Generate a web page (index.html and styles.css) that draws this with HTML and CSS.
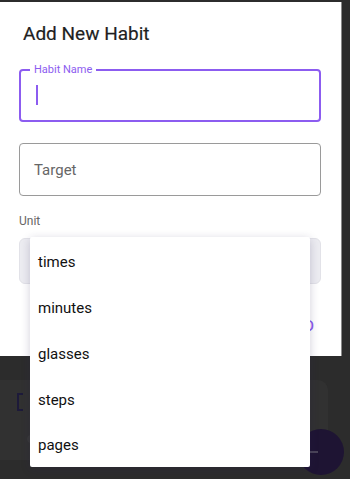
FILE: index.html
```html
<!DOCTYPE html>
<html>
<head>
<meta charset="utf-8">
<link rel="stylesheet" href="styles.css">
</head>
<body>
<div class="screen">
  <div class="bg-card">
    <span class="bg-box"></span>
    <span class="bg-bar"></span>
  </div>
  <div class="fab"><span class="fab-plus"></span></div>

  <div class="dialog">
    <h2 class="title">Add New Habit</h2>
    <div class="field field-focused">
      <span class="field-label">Habit Name</span>
      <span class="cursor"></span>
    </div>
    <div class="field">
      <span class="placeholder">Target</span>
    </div>
    <div class="unit-label">Unit</div>
    <div class="select"></div>
    <div class="actions"><span class="action-btn">ADD</span></div>
  </div>

  <ul class="menu">
    <li class="menu-item">times</li>
    <li class="menu-item">minutes</li>
    <li class="menu-item">glasses</li>
    <li class="menu-item">steps</li>
    <li class="menu-item">pages</li>
  </ul>
</div>
</body>
</html>
```
FILE: styles.css
```css
* { box-sizing: border-box; }
html, body {
  margin: 0;
  padding: 0;
  width: 350px;
  height: 479px;
  overflow: hidden;
  background: #2c2c2c;
  font-family: Roboto, "Noto Sans", sans-serif;
}
.screen {
  position: relative;
  width: 350px;
  height: 479px;
  padding: 380px 12px 0 0;
}
.bg-card {
  height: 80px;
  width: 338px;
  margin-left: -10px;
  background: #313131;
  border-radius: 10px;
  padding: 13px 0 0 37px;
  display: flex;
  flex-direction: column;
  gap: 24px;
}
.bg-box {
  display: block;
  width: 6px;
  height: 18px;
  border: 2px solid #1d1a3a;
  border-right: none;
  margin-left: -10px;
}
.bg-bar {
  display: block;
  width: 60px;
  height: 8px;
  border-radius: 4px;
  background: #383838;
}
.fab {
  position: absolute;
  left: 298px;
  top: 429px;
  width: 46px;
  height: 46px;
  border-radius: 50%;
  background: #1e1433;
  display: flex;
  align-items: center;
  justify-content: center;
}
.fab-plus {
  width: 8px;
  height: 2px;
  background: #4a4458;
  margin-left: -14px;
}
.dialog {
  position: absolute;
  left: 0;
  top: 2px;
  width: 342px;
  height: 354px;
  background: #ffffff;
  border-right: 1px solid #8a8a8a;
  padding: 20px 20px 0 19px;
  display: flex;
  flex-direction: column;
}
.title {
  margin: 0 0 0 4px;
  font-size: 19px;
  font-weight: 400;
  color: #1f1f1f;
  line-height: 24px;
  -webkit-text-stroke: 0.2px #1f1f1f;
}
.field {
  position: relative;
  margin-top: 23px;
  height: 53px;
  width: 302px;
  border: 1px solid #9a9a9a;
  border-radius: 4px;
  display: flex;
  align-items: center;
  padding-left: 14px;
}
.field-focused {
  border: 2px solid #8c5cf0;
  margin-top: 23px;
}
.field + .field { margin-top: 21px; }
.field-label {
  position: absolute;
  left: 9px;
  top: -8px;
  background: #fff;
  padding: 0 4px;
  font-size: 11px;
  line-height: 13px;
  color: #8c5cf0;
}
.cursor {
  display: block;
  width: 2px;
  height: 20px;
  background: #8c5cf0;
  margin-left: 1px;
  margin-top: -2px;
}
.placeholder {
  font-size: 15px;
  color: #666666;
}
.unit-label {
  margin-top: 17px;
  font-size: 12px;
  color: #666;
  line-height: 16px;
}
.select {
  margin-top: 9px;
  width: 302px;
  height: 46px;
  border-radius: 6px;
  background: #ececf1;
  border: 1px solid #e2e2e8;
}
.actions {
  display: flex;
  justify-content: flex-end;
  padding-right: 7px;
  margin-top: 34px;
}
.action-btn {
  color: #8c5cf0;
  font-size: 14px;
  font-weight: 500;
}
.menu {
  position: absolute;
  left: 30px;
  top: 237px;
  width: 280px;
  margin: 0;
  padding: 2px 0 0;
  list-style: none;
  background: #fff;
  box-shadow: 0 2px 10px rgba(40, 30, 80, 0.22);
  border-radius: 2px;
}
.menu-item {
  height: 46px;
  display: flex;
  align-items: center;
  padding-left: 8px;
  font-size: 15px;
  color: #111;
}
.menu-item:last-child { height: 44px; }
```
